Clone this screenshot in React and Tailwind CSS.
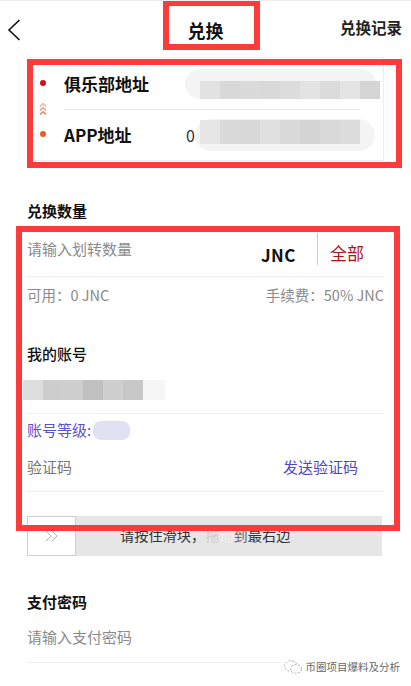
import React from 'react';

const FONT = { fontFamily: '"Noto Sans CJK SC", "Noto Sans", sans-serif' };

// --- blurred (pixelated) placeholder content ---
const Pixels = ({ cells, h, className = '' }) => (
  <div className={`flex ${className}`}>
    {cells.map((c, i) => (
      <div key={i} className={`w-[20px] ${h}`} style={{ background: c }} />
    ))}
  </div>
);

const BackIcon = () => (
  <svg width="14" height="24" viewBox="0 0 14 24" fill="none">
    <path d="M12.5 2 L2 12 L12.5 22" stroke="#111" strokeWidth="1.6" />
  </svg>
);

const ChevronsUp = () => (
  <svg width="8" height="15" viewBox="0 0 8 15" fill="none">
    <path d="M1 4.5 L4 1.5 L7 4.5" stroke="#f6a58a" strokeWidth="1.2" />
    <path d="M1 8.5 L4 5.5 L7 8.5" stroke="#f38a6a" strokeWidth="1.2" />
    <path d="M1 12.5 L4 9.5 L7 12.5" stroke="#f07050" strokeWidth="1.2" />
  </svg>
);

const ChevronsRight = () => (
  <svg width="14" height="12" viewBox="0 0 14 12" fill="none">
    <path d="M1 1 L6 6 L1 11" stroke="#b5b5b5" strokeWidth="1" />
    <path d="M7 1 L12 6 L7 11" stroke="#b5b5b5" strokeWidth="1" />
  </svg>
);

const WechatIcon = () => (
  <svg width="20" height="16" viewBox="0 0 20 16" fill="none">
    <ellipse cx="8" cy="7" rx="6.5" ry="5.2" stroke="#aaa" strokeWidth="1" strokeDasharray="2 1.5" />
    <ellipse cx="13" cy="10" rx="5.5" ry="4.3" fill="white" stroke="#aaa" strokeWidth="1" strokeDasharray="2 1.5" />
  </svg>
);

const AddressCard = () => (
  <div className="relative mx-[27px]">
    <div className="flex h-[104px] border border-[#eeeeee]">
      <div className="flex w-[30px] flex-col items-center pt-[22px]">
        <div className="h-[6px] w-[6px] rounded-full bg-[#d0101b]" />
        <div className="mt-[16px]"><ChevronsUp /></div>
        <div className="mt-[14px] h-[6px] w-[6px] rounded-full bg-[#f25a1a]" />
      </div>
      <div className="ml-[6px] mr-[23px] flex flex-1 flex-col">
        <div className="flex h-[52px] items-center border-b border-[#e8e8e8]">
          <span className="w-[121px] shrink-0 text-[17px] font-semibold text-[#111]">俱乐部地址</span>
          <div className="-mr-[16px] flex h-[30px] w-[191px] shrink-0 items-end rounded-full bg-[#f4f4f4] pl-[15px] blur-[0.5px]">
            <Pixels h="h-[18px]" cells={['#e2e2e2', '#d8d8d8', '#dadada', '#d9d9d9', '#dcdcdc', '#e3e3e3', '#dbdbdb', '#e4e4e4', '#d5d5d5']} />
          </div>
        </div>
        <div className="flex h-[50px] items-center">
          <span className="w-[122px] shrink-0 text-[17px] font-semibold text-[#111]">APP地址</span>
          <span className="w-[9px] shrink-0 text-[16px] text-[#333]">0</span>
          <div className="-mr-[15px] flex h-[32px] w-[180px] shrink-0 items-start rounded-full bg-[#f4f4f4] pl-[5px] pt-[1px] blur-[0.5px]">
            <Pixels h="h-[24px]" cells={['#e6e6e6', '#dadada', '#d8d8d8', '#e0e0e0', '#dadada', '#d4d4d4', '#d9d9d9', '#dcdcdc']} />
          </div>
        </div>
      </div>
    </div>
    {/* annotation box */}
    <div className="pointer-events-none absolute -bottom-[7px] -right-[18px] left-0 top-[2px] border-[6px] border-[#fc3b3b]" />
  </div>
);

export default function App() {
  return (
    <div className="min-h-screen w-full overflow-hidden bg-white" style={FONT}>
      {/* Top bar */}
      <header className="relative grid h-[57px] grid-cols-[1fr_auto_1fr] items-center border-t border-[#eeeeee]">
        <div className="pl-[7px] pt-[2px]"><BackIcon /></div>
        <span className="pt-[3px] text-[18px] font-bold text-[#111]">兑换</span>
        <span className="justify-self-end pb-[2px] pr-[9px] text-[15.5px] font-semibold text-[#222]">兑换记录</span>
        <div className="pointer-events-none absolute left-[163px] top-0 h-[49px] w-[97px] border-[6px] border-t-[5px] border-[#fc3b3b]" />
      </header>

      <AddressCard />

      <div className="px-[27px]">
        <div className="pt-[40px] pb-[8px] text-[15px] font-bold leading-[19px] text-[#111]">兑换数量</div>

        <div className="relative">
          {/* amount */}
          <div className="flex h-[49px] items-center border-b border-[#eeeeee]">
            <span className="flex-1 self-start pt-[10px] text-[15px] text-[#8a8a8a]">请输入划转数量</span>
            <span className="pt-[5px] text-[17px] font-bold tracking-[0.5px] text-[#111]">JNC</span>
            <div className="ml-[21px] mt-[5px] h-[32px] w-px self-start bg-[#cccccc]" />
            <span className="ml-[12px] mr-[20px] pt-[2px] text-[17px] text-[#b5121b]">全部</span>
          </div>
          <div className="flex h-[36px] items-center justify-between text-[14.5px] text-[#8a8a8a]">
            <span>可用：0 JNC</span>
            <span>手续费：50% JNC</span>
          </div>

          {/* account */}
          <div className="pt-[32px] text-[15px] font-medium leading-[18px] text-[#111]">我的账号</div>
          <div className="border-b border-[#eeeeee] pb-[13px] pt-[17px]">
            <div className="-ml-[4px] flex h-[20px] w-[142px] items-center blur-[0.4px]">
              <Pixels h="h-[20px]" cells={['#dedede', '#cdcdcd', '#cfcfcf', '#c0c0c0', '#cfcfcf', '#c7c7c7']} />
              <div className="h-[20px] w-[22px] bg-[#f6f6f6]" />
            </div>
          </div>
          <div className="flex h-[33px] items-center text-[15px] text-[#5a52c8]">
            <span>账号等级:</span>
            <div className="ml-[2px] h-[19px] w-[37px] rounded-[8px] bg-[#e2e0f3] blur-[0.5px]" />
          </div>

          {/* verification code */}
          <div className="flex items-center justify-between border-b border-[#eeeeee] pb-[15px] pt-[11px] text-[15px] leading-[18px]">
            <span className="text-[#777]">验证码</span>
            <span className="mr-[26px] text-[#4b47c8]">发送验证码</span>
          </div>

          {/* slider */}
          <div className="mr-[2px] mt-[24px] flex h-[40px] items-center bg-[#e6e6e6]">
            <div className="flex h-[40px] w-[49px] items-center justify-center border border-[#cfcfcf] bg-white">
              <ChevronsRight />
            </div>
            <span className="ml-[44px] text-[14.2px] text-[#333]">
              请按住滑块，<span className="text-[#cfcfcf]">拖</span><span className="text-[#f0f0f0]">动</span><span className="text-[#666]">到</span>最右边
            </span>
          </div>

          <div className="pointer-events-none absolute -left-[11px] -right-[16px] -top-[2px] bottom-[25px] border-[6px] border-[#fc3b3b]" />
        </div>

        {/* pay password */}
        <div className="pt-[37px] text-[15px] font-bold leading-[18px] text-[#111]">支付密码</div>
        <div className="relative border-b border-[#eeeeee] pb-[16px] pt-[17px] text-[15px] leading-[18px] text-[#8a8a8a]">
          请输入支付密码
          <div className="absolute -right-[16px] top-[47px] flex items-center gap-[3px] bg-white pl-[2px] text-[10.5px] text-[#666]">
            <WechatIcon />
            <span>币圈项目爆料及分析</span>
          </div>
        </div>
      </div>
    </div>
  );
}
